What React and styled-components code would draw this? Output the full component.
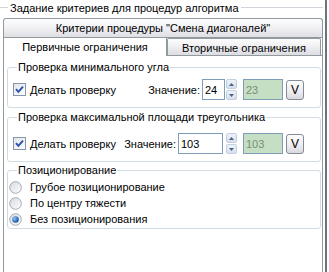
import React, { useId } from 'react'
import styled, { createGlobalStyle } from 'styled-components'

const GlobalStyle = createGlobalStyle`
    html, body {
        margin: 0;
        padding: 0;
        background: #fff;
    }
    body {
        font-family: "Liberation Sans", Arial, sans-serif;
        font-size: 11px;
        color: #000;
    }
`

const Root = styled.div`
    display: flex;
    width: 329px;
    height: 272px;
    overflow: hidden;
    background: #fff;
`

const Main = styled.div`
    width: 323px;
    display: flex;
    flex-direction: column;
`

const Edge = styled.div`
    width: 2px;
    margin-left: 2px;
    background: #6e727c;
`

const OuterLegend = styled.div`
    height: 16px;
    display: flex;
    align-items: center;
    line-height: 13px;
`

const Rule = styled.div`
    height: 1px;
    background: #d0d4da;
    width: ${p => p.$w ? p.$w + 'px' : 'auto'};
    flex: ${p => p.$w ? 'none' : '1'};
    margin-top: -1px;
`

const LegendText = styled.span`
    padding: 0 2px;
    white-space: nowrap;
`

const Tabs = styled.div`
    margin: 2px 0 0 3px;
    width: 320px;
    flex: 1;
    display: flex;
    flex-direction: column;
`

const BigTab = styled.div`
    height: 18px;
    border: 1px solid #919b9c;
    border-bottom: none;
    border-radius: 3px 3px 0 0;
    background: linear-gradient(#fdfdfe, #f2f2f5 45%, #dedee4);
    display: flex;
    align-items: center;
    justify-content: center;
    white-space: nowrap;
`

const TabRow = styled.div`
    display: flex;
    align-items: flex-end;
    border-top: 1px solid #919b9c;
    border-left: 1px solid #919b9c;
    border-right: 1px solid #919b9c;
`

const Tab = styled.div`
    box-sizing: border-box;
    width: ${p => p.$w}px;
    height: ${p => p.$active ? 18 : 17}px;
    margin-bottom: ${p => p.$active ? -1 : 0}px;
    position: relative;
    z-index: ${p => p.$active ? 1 : 0};
    border-right: 1px solid #919b9c;
    border-left: ${p => p.$active ? 'none' : '1px solid #919b9c'};
    border-top: ${p => p.$active ? 'none' : '1px solid #919b9c'};
    border-radius: ${p => p.$active ? 0 : '2px 2px 0 0'};
    background: ${p => p.$active ? '#fff' : 'linear-gradient(#fdfdfe, #f0f0f3 45%, #dcdce2)'};
    display: flex;
    align-items: center;
    justify-content: center;
    white-space: nowrap;
    padding-top: ${p => p.$active ? 0 : 1}px;
`

const Pane = styled.div`
    flex: 1;
    border-left: 1px solid #919b9c;
    border-right: 1px solid #919b9c;
    border-top: 1px solid #919b9c;
    background: #fff;
    padding: 5px 1px 0 3px;
`

const Group = styled.fieldset`
    margin: ${p => p.$mt}px 0 0 0;
    padding: 0 0 ${p => p.$pb}px 5px;
    border: 1px solid #d3dbe3;
    border-radius: 3px;
    min-width: 0;
`

const GroupTitle = styled.legend`
    margin-left: 4px;
    padding: 0 1px;
    line-height: 13px;
    white-space: nowrap;
`

const CheckRow = styled.div`
    display: flex;
    align-items: center;
    height: 21px;
    margin-top: ${p => p.$mt}px;
    padding-right: 16px;
`

const Label = styled.label`
    display: flex;
    align-items: center;
    gap: 4px;
    white-space: nowrap;
`

const ValueLabel = styled.span`
    margin-left: auto;
    margin-right: 2px;
    white-space: nowrap;
`

const Input = styled.div`
    box-sizing: border-box;
    width: ${p => p.$w}px;
    height: 21px;
    border: 1px solid #7f9db9;
    background: ${p => p.$ro ? '#c4dfc4' : '#fff'};
    color: ${p => p.$ro ? '#7c8c7c' : '#000'};
    display: flex;
    align-items: center;
    padding-left: 2px;
    margin-left: ${p => p.$ml || 0}px;
`

const Spin = styled.div`
    display: flex;
    flex-direction: column;
    width: 11px;
    height: 21px;
    margin-left: ${p => p.$ml}px;
    gap: 1px;
`

const SpinBtn = styled.div`
    flex: 1;
    box-sizing: border-box;
    border: 1px solid #c2cfdf;
    border-radius: 2px;
    background: linear-gradient(#eef3fa, #d5dfee);
    display: flex;
    align-items: center;
    justify-content: center;
`

const VButton = styled.div`
    box-sizing: border-box;
    width: 18px;
    height: 20px;
    margin-left: 3px;
    border: 1px solid #858b95;
    border-radius: 3px;
    background: linear-gradient(#fefefe, #ececf0 60%, #d8d8de);
    display: flex;
    align-items: center;
    justify-content: center;
    font-size: 12px;
`

const RadioList = styled.div`
    display: flex;
    flex-direction: column;
    margin-top: 2px;
    margin-left: -4px;
`

const RadioRow = styled.label`
    display: flex;
    align-items: center;
    gap: 8px;
    height: 16px;
    white-space: nowrap;
`

function CheckBox() {
    const id = useId()
    return (
        <svg width="13" height="13" viewBox="0 0 13 13">
            <defs>
                <linearGradient id={id} x1="0" y1="0" x2="1" y2="1">
                    <stop offset="0" stopColor="#dfe3e8" />
                    <stop offset="1" stopColor="#ffffff" />
                </linearGradient>
            </defs>
            <rect x="0.5" y="0.5" width="12" height="12" fill={`url(#${id})`} stroke="#8796ad" />
            <path d="M3 6.2 L5.4 8.8 L10 3.6" stroke="#2c4fb0" strokeWidth="1.9" fill="none" />
        </svg>
    )
}

function Radio({ checked }) {
    const id = useId()
    return (
        <svg width="13" height="13" viewBox="0 0 13 13">
            <defs>
                <linearGradient id={id + 'a'} x1="0" y1="0" x2="1" y2="1">
                    <stop offset="0" stopColor="#d6d9de" />
                    <stop offset="1" stopColor="#ffffff" />
                </linearGradient>
                <radialGradient id={id + 'b'} cx="0.35" cy="0.35" r="0.7">
                    <stop offset="0" stopColor="#8fc4f5" />
                    <stop offset="1" stopColor="#0d4e9e" />
                </radialGradient>
            </defs>
            <circle cx="6.5" cy="6.5" r="5.8" fill={`url(#${id}a)`} stroke="#a3a9b2" />
            {checked && <circle cx="6.5" cy="6.5" r="3.3" fill={`url(#${id}b)`} />}
        </svg>
    )
}

function Arrow({ up }) {
    return (
        <svg width="5" height="3" viewBox="0 0 5 3">
            <path d={up ? 'M0 3 L2.5 0 L5 3 Z' : 'M0 0 L2.5 3 L5 0 Z'} fill="#4d6185" />
        </svg>
    )
}

function ValueRow({ value, limit, inputW, spinGap, mt }) {
    return (
        <CheckRow $mt={mt}>
            <Label><CheckBox />Делать проверку</Label>
            <ValueLabel>Значение:</ValueLabel>
            <Input $w={inputW}>{value}</Input>
            <Spin $ml={spinGap}>
                <SpinBtn><Arrow up /></SpinBtn>
                <SpinBtn><Arrow /></SpinBtn>
            </Spin>
            <Input $w={40} $ro $ml={6}>{limit}</Input>
            <VButton>V</VButton>
        </CheckRow>
    )
}

export default function App() {
    const options = ['Грубое позиционирование', 'По центру тяжести', 'Без позиционирования']

    return (
        <Root>
            <GlobalStyle />
            <Main>
                <OuterLegend>
                    <Rule $w={8} />
                    <LegendText>Задание критериев для процедур алгоритма</LegendText>
                    <Rule />
                </OuterLegend>
                <Tabs>
                    <BigTab>Критерии процедуры "Смена диагоналей"</BigTab>
                    <TabRow>
                        <Tab $active $w={163}>Первичные ограничения</Tab>
                        <Tab $w={154}>Вторичные ограничения</Tab>
                    </TabRow>
                    <Pane>
                        <Group $mt={0} $pb={7}>
                            <GroupTitle>Проверка минимального угла</GroupTitle>
                            <ValueRow value="24" limit="23" inputW={23} spinGap={1} mt={5} />
                        </Group>
                        <Group $mt={3} $pb={7}>
                            <GroupTitle>Проверка максимальной площади треугольника</GroupTitle>
                            <ValueRow value="103" limit="103" inputW={45} spinGap={3} mt={9} />
                        </Group>
                        <Group $mt={2} $pb={1}>
                            <GroupTitle>Позиционирование</GroupTitle>
                            <RadioList>
                                {options.map((o, i) => (
                                    <RadioRow key={o}>
                                        <Radio checked={i === 2} />
                                        {o}
                                    </RadioRow>
                                ))}
                            </RadioList>
                        </Group>
                    </Pane>
                </Tabs>
            </Main>
            <Edge />
        </Root>
    )
}
